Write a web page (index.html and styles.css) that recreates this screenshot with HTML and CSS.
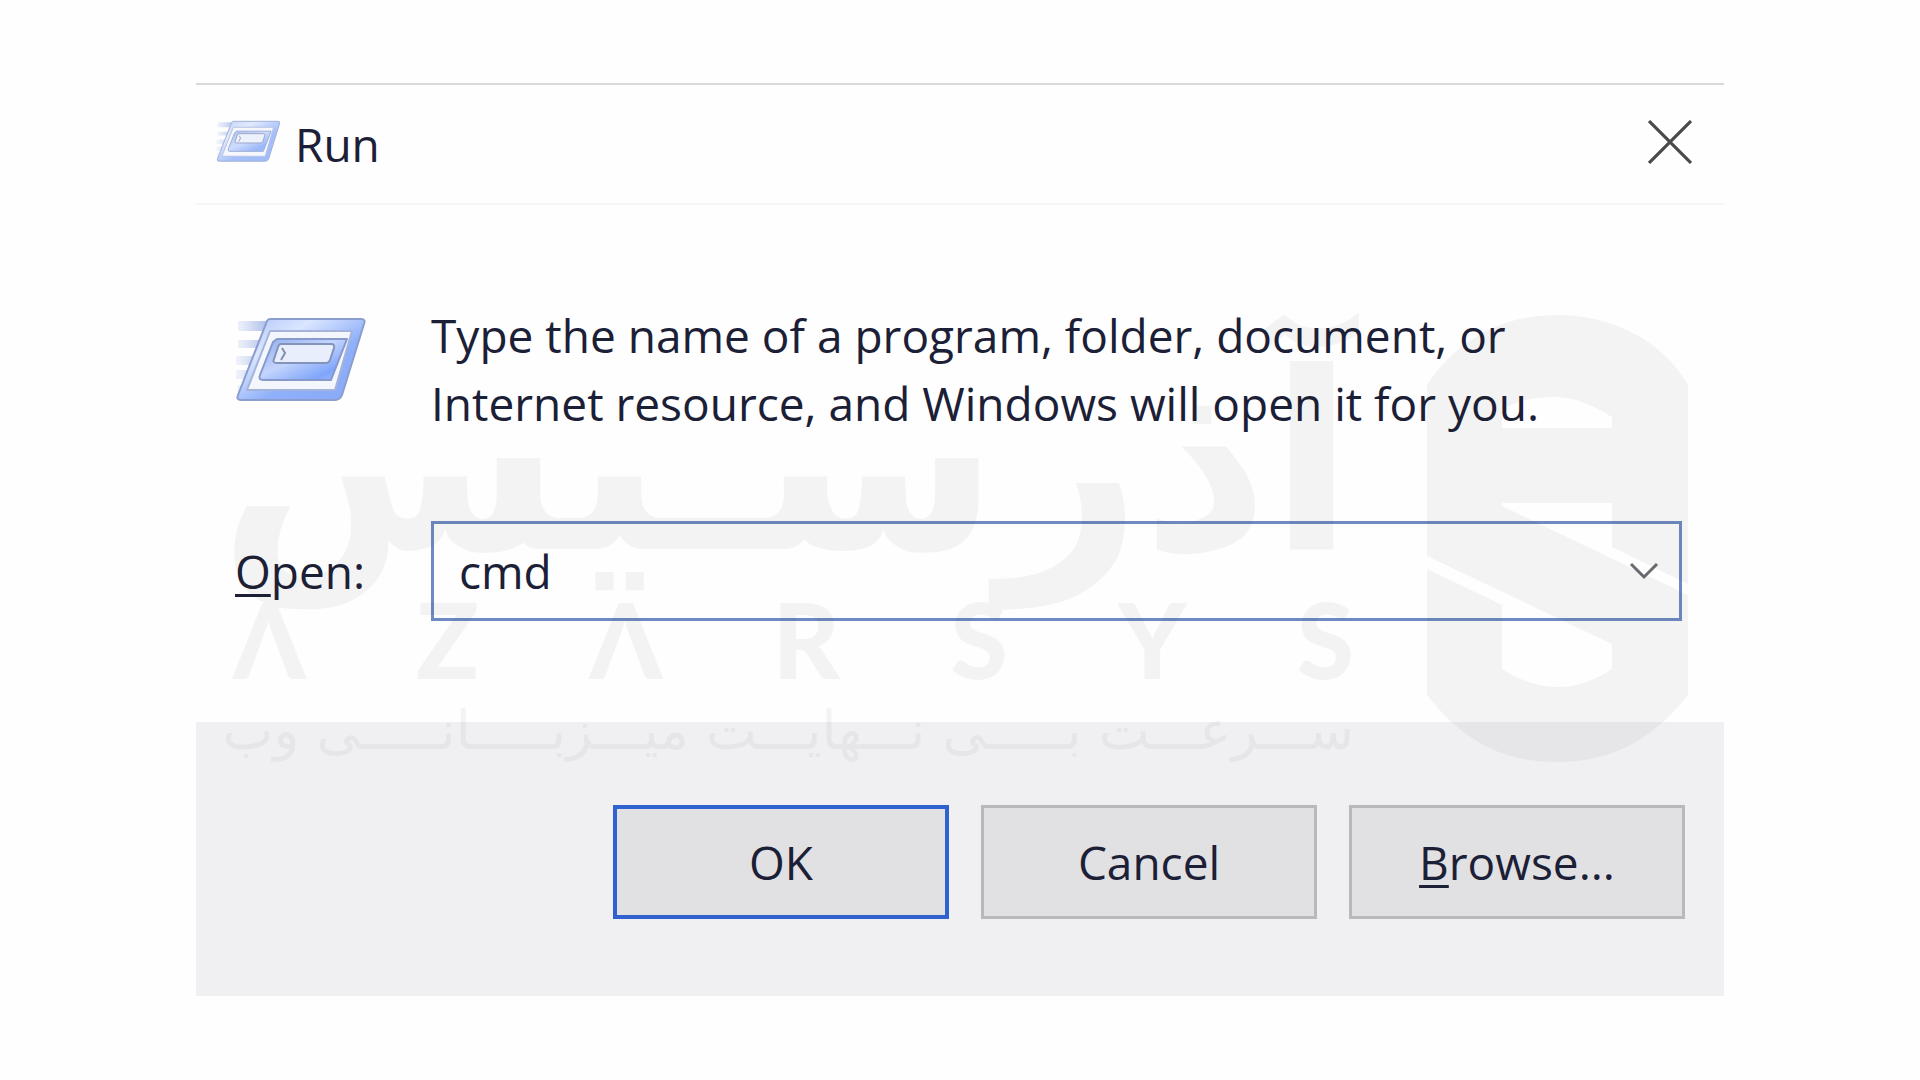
FILE: index.html
```html
<!DOCTYPE html>
<html lang="en">
<head>
    <meta charset="utf-8">
    <title>Run</title>
    <link rel="stylesheet" href="styles.css">
</head>
<body>
<div class="dialog">
    <div class="titlebar">
        <svg class="title-icon" viewBox="0 0 134 88">
            <use href="#run-icon"/>
        </svg>
        <h1>Run</h1>
        <button type="button" class="close" aria-label="Close">
            <svg viewBox="0 0 42 42"><path d="M1 1L41 41M41 1L1 41"/></svg>
        </button>
    </div>

    <form>
        <div class="content">
            <svg class="run-icon" viewBox="0 0 134 88">
                <defs>
                    <linearGradient id="frame" x1="0" y1="0" x2="1" y2="1">
                        <stop offset="0" stop-color="#a9c0f5"/>
                        <stop offset=".3" stop-color="#dbe6ff"/>
                        <stop offset=".6" stop-color="#8fb0fa"/>
                        <stop offset="1" stop-color="#86a9f8"/>
                    </linearGradient>
                    <linearGradient id="panel" x1="0" y1="0" x2="1" y2="1">
                        <stop offset="0" stop-color="#8fadee"/>
                        <stop offset=".45" stop-color="#c3d4fd"/>
                        <stop offset=".8" stop-color="#7fa5fb"/>
                        <stop offset="1" stop-color="#a5bffa"/>
                    </linearGradient>
                    <linearGradient id="speed">
                        <stop offset="0" stop-color="#b9c8ee" stop-opacity=".2"/>
                        <stop offset="1" stop-color="#9fb3e4"/>
                    </linearGradient>
                </defs>
                <g id="run-icon">
                    <path fill="url(#speed)" d="M3 4H37L33 14H3ZM3 23H29L26 31H3ZM1 39H23L20 48H1ZM1 53H17L14 62H1ZM3 68H12L8 76H3Z"/>
                    <path fill="url(#frame)" stroke="#8b9dce" stroke-width="2" stroke-linejoin="round" d="M35 2H126Q131 2 129 7L107 78Q105 83 100 83H6Q1 83 3 78L32 4Q33 2 35 2Z"/>
                    <path fill="#f4f6fd" stroke="#a5b3db" stroke-width="2" stroke-linejoin="round" d="M35 14H117L100 73H12Z"/>
                    <path fill="url(#panel)" stroke="#8798cd" stroke-width="2" stroke-linejoin="round" d="M42 22H112L96 63H28Q23 63 25 58L38 25Z"/>
                    <path fill="#e9eefc" stroke="#8493b8" stroke-width="2" stroke-linejoin="round" d="M46 27H96Q100 27 99 31L95 43Q94 46 91 46H42Q37 46 39 42L43 30Q44 27 46 27Z"/>
                    <path fill="none" stroke="#8490ad" stroke-width="2" d="M47 31L50 36L46 43"/>
                </g>
            </svg>
            <p class="message">Type the name of a program, folder, document, or<br>Internet resource, and Windows will open it for you.</p>

            <label for="command"><u>O</u>pen:</label>
            <div class="combo">
                <input type="text" id="command" value="cmd" spellcheck="false" autocomplete="off">
                <button type="button" class="arrow" aria-label="Show recent commands">
                    <svg viewBox="0 0 30 18"><path d="M2 2L15 15L28 2"/></svg>
                </button>
            </div>
        </div>

        <div class="buttons">
            <button type="submit" class="default">OK</button>
            <button type="button">Cancel</button>
            <button type="button"><u>B</u>rowse...</button>
        </div>
    </form>

    <div class="watermark">
        <div class="brand">
            <div class="brand-fa" lang="fa" dir="rtl">آذرسـیس</div>
            <div class="brand-en">
                <span>Λ</span><span>Z</span><span>Λ</span><span>R</span><span>S</span><span>Y</span><span>S</span>
            </div>
            <div class="tagline" lang="fa" dir="rtl">ســـرعـــت بـــــی نـــهایـــت میـــزبـــــانـــــی وب</div>
        </div>
        <svg class="emblem" viewBox="0 0 261 447">
            <path fill-rule="evenodd" d="M0 70C30 25 75 0 130 0S235 25 261 70V380C225 425 185 447 130 447S35 425 0 380Z
                M75 113H185V102C160 87 145 82 125 82Q98 82 75 94Z
                M75 188H185V232L261 269V280L75 191Z
                M0 241L185 329V354Q158 372 130 372Q102 372 75 354V290L0 254Z"/>
        </svg>
    </div>
</div>
</body>
</html>
```
FILE: styles.css
```css
* {
    box-sizing: border-box;
}
body {
    margin: 0;
    background-color: #fefefe;
    color: #1c2036;
    font-family: "Open Sans", "Noto Sans", sans-serif;
    font-size: 46px;
}
button, input {
    font: inherit;
    color: inherit;
    border-radius: 0;
}
svg {
    display: block;
}
u {
    text-decoration-thickness: 3px;
    text-underline-offset: 5px;
    text-decoration-skip-ink: none;
}

.dialog {
    position: relative;
    margin: 83px 196px;
    border-top: 2px solid #d8d8d9;
}

.titlebar {
    display: flex;
    align-items: center;
    height: 120px;
    padding: 0 32px 4px 20px;
    border-bottom: 2px solid #f6f6f7;
}
.title-icon {
    width: 66px;
    height: 44px;
    opacity: .8;
}
h1 {
    flex: 1;
    margin: 4px 0 0 13px;
    font-size: 46px;
    font-weight: 400;
}
.close {
    padding: 0;
    border: 0;
    background: none;
}
.close svg {
    width: 44px;
    height: 44px;
    fill: none;
    stroke: #4a4a4c;
    stroke-width: 3;
}

.content {
    display: grid;
    grid-template-columns: 196px 1fr;
    align-items: center;
    row-gap: 84px;
    padding: 96px 42px 101px 39px;
}
.run-icon {
    width: 134px;
    height: 88px;
    margin-bottom: 16px;
}
.message {
    margin: 0;
    line-height: 68px;
    white-space: nowrap;
}
.combo {
    display: flex;
    height: 100px;
    border: 3px solid #6f8ac2;
}
.combo input {
    flex: 1;
    min-width: 0;
    padding: 0 25px;
    border: 0;
    outline: 0;
    background: none;
}
.arrow {
    padding: 0 20px;
    border: 0;
    background: none;
}
.arrow svg {
    width: 30px;
    height: 18px;
    fill: none;
    stroke: #6a6a70;
    stroke-width: 3;
}

.buttons {
    display: flex;
    justify-content: flex-end;
    gap: 32px;
    padding: 83px 39px 77px;
    background-color: #f0f0f2;
}
.buttons button {
    width: 336px;
    height: 114px;
    padding: 0;
    border: 3px solid #b9b9bb;
    background-color: #e1e1e3;
}
.buttons .default {
    border: 4px solid #2f61cf;
}

.watermark {
    position: absolute;
    top: 230px;
    left: 37px;
    right: 36px;
    display: flex;
    justify-content: space-between;
    color: #202030;
    opacity: .045;
    pointer-events: none;
}
.brand {
    width: 1121px;
}
.brand-fa {
    height: 272px;
    font-family: "DejaVu Sans", sans-serif;
    font-size: 248px;
    font-weight: 700;
    line-height: 296px;
    white-space: nowrap;
}
.brand-en {
    display: flex;
    justify-content: space-between;
    font-family: Lato, sans-serif;
    font-size: 104px;
    font-weight: 900;
    line-height: 104px;
}
.tagline {
    font-family: "DejaVu Sans", sans-serif;
    font-size: 54px;
    line-height: 80px;
    white-space: nowrap;
}
.emblem {
    width: 261px;
    height: 447px;
    fill: currentColor;
}
```
